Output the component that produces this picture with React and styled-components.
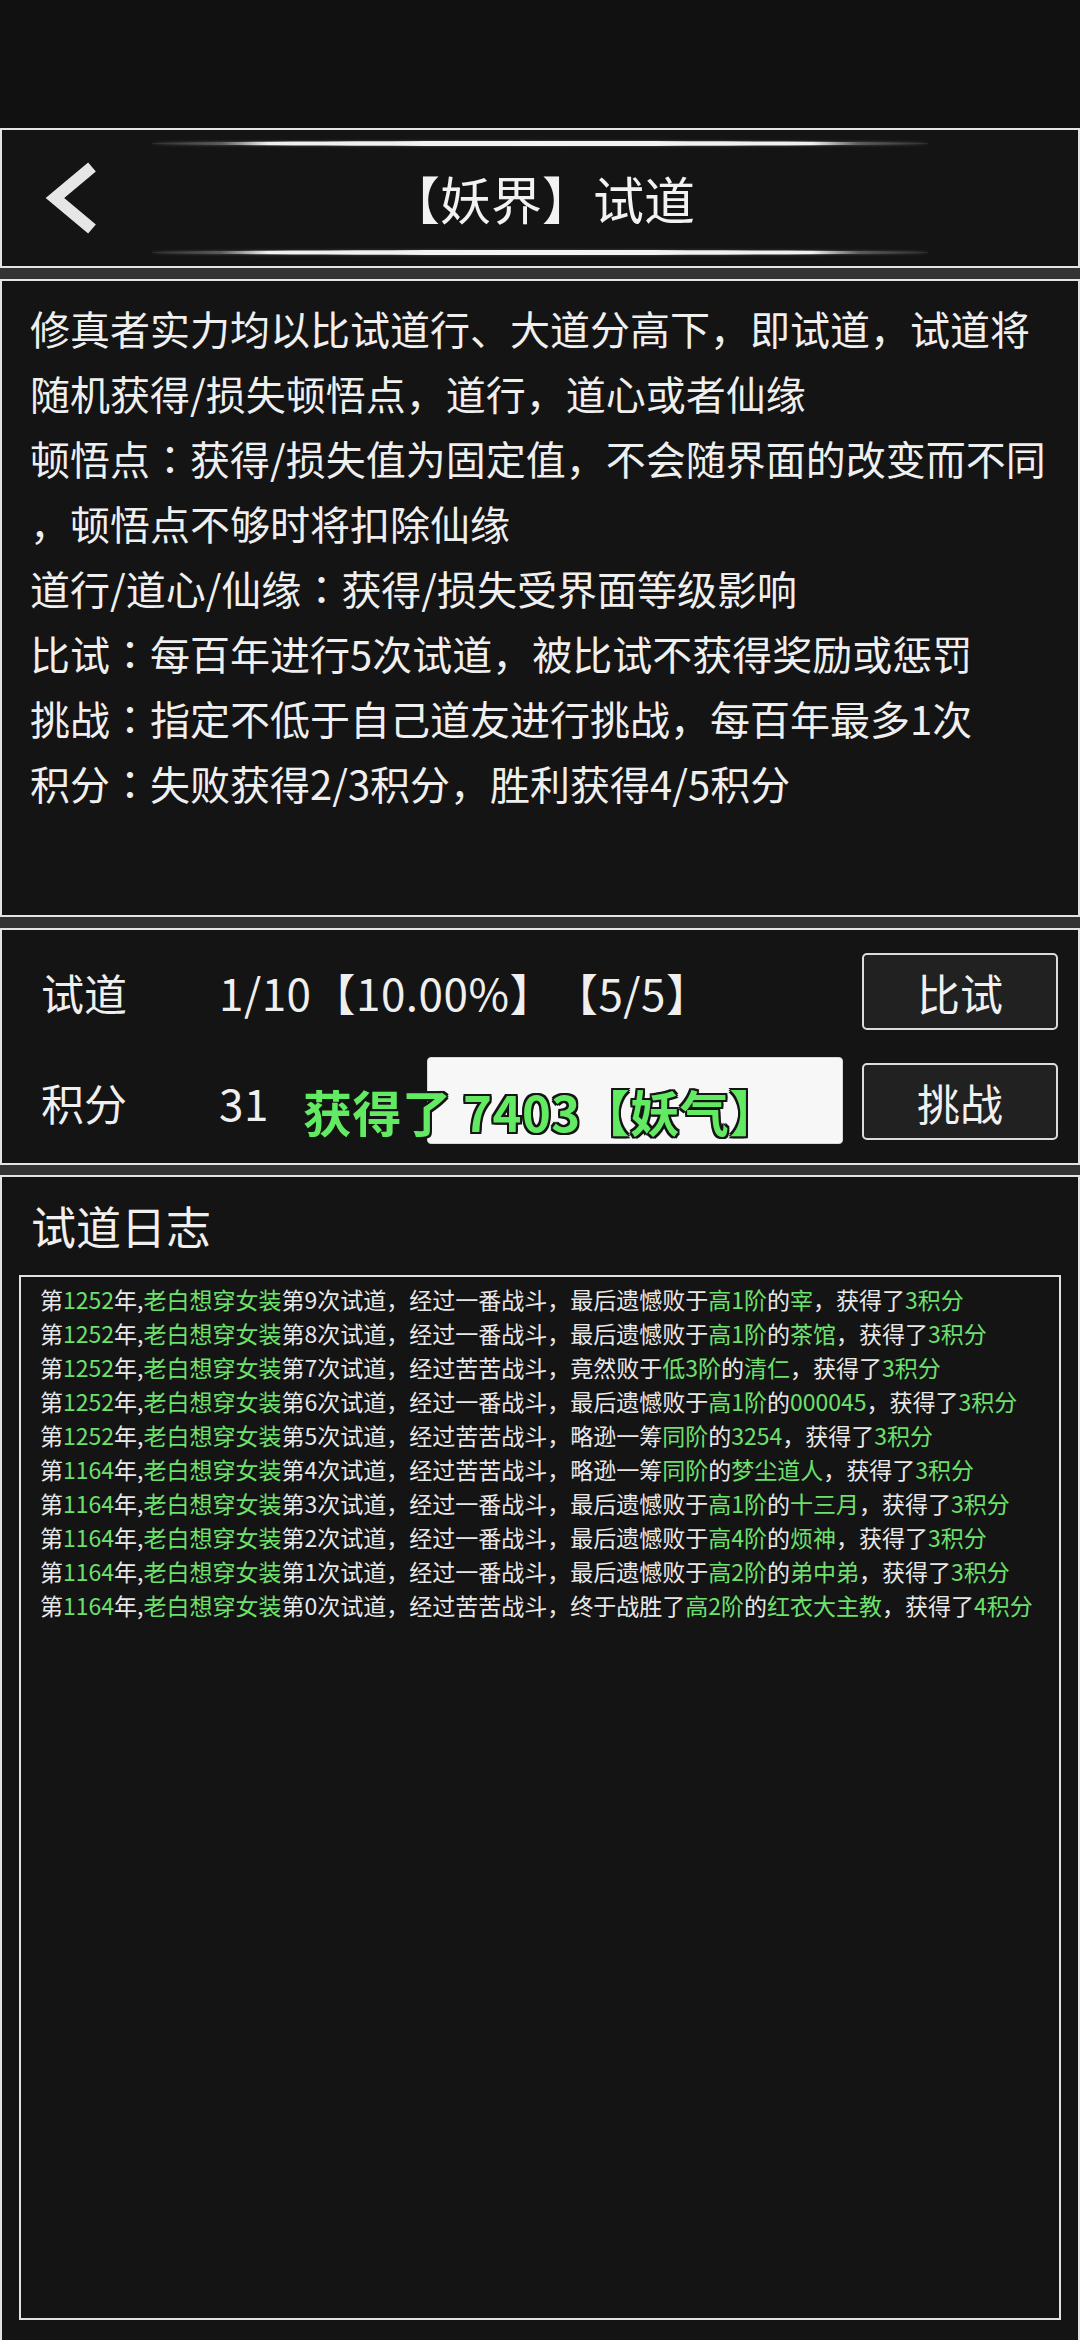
import React from "react";
import styled, { createGlobalStyle } from "styled-components";

const GlobalStyle = createGlobalStyle`
  html, body {
    margin: 0;
    padding: 0;
    background: #141414;
    overflow: hidden;
  }
  body {
    font-family: "Noto Sans CJK SC", "Noto Sans", sans-serif;
    text-spacing-trim: space-all;
  }
`;

const Page = styled.div`
  width: 1080px;
  height: 2340px;
  display: flex;
  flex-direction: column;
  background: #141414;
  overflow: hidden;
`;

const StatusBar = styled.div`
  height: 128px;
  flex-shrink: 0;
  background: #111;
`;

const Panel = styled.section`
  position: relative;
  box-sizing: border-box;
  flex-shrink: 0;
  height: ${(p) => p.$h}px;
  border: 2px solid #e4e4e4;
  border-bottom: ${(p) => (p.$open ? "none" : "2px solid #e4e4e4")};
  background: #141414;
`;

const Gap = styled.div`
  height: ${(p) => p.$h}px;
  flex-shrink: 0;
  background: #343434;
`;

/* header */
const HeaderPanel = styled(Panel)`
  display: flex;
  flex-direction: column;
  align-items: center;
  padding-top: 11px;
`;

const GlowLine = styled.div`
  width: 778px;
  height: 5px;
  border-radius: 50%;
  background: linear-gradient(
    90deg,
    rgba(255, 255, 255, 0.12) 0%,
    rgba(255, 255, 255, 0.3) 9%,
    #efefef 15%,
    #f4f4f4 50%,
    #efefef 85%,
    rgba(255, 255, 255, 0.3) 91%,
    rgba(255, 255, 255, 0.12) 100%
  );
  box-shadow: 0 0 3px rgba(255, 255, 255, 0.25);
`;

const TitleRow = styled.div`
  width: 100%;
  height: 104px;
  display: grid;
  grid-template-columns: 1fr auto 1fr;
  align-items: center;
`;

const BackButton = styled.button`
  justify-self: start;
  margin-left: 44px;
  padding: 0;
  border: none;
  background: none;
  width: 50px;
  height: 74px;
  & svg {
    display: block;
    overflow: visible;
  }
`;

const Title = styled.h1`
  margin: 0 0 0 4px;
  font-size: 51px;
  font-weight: 400;
  line-height: 60px;
  color: #f2f2f2;
  white-space: nowrap;
`;

/* description */
const DescPanel = styled(Panel)`
  padding: 15px 0 0 28px;
`;

const DescLine = styled.div`
  font-size: 40px;
  line-height: 65px;
  color: #efefef;
  white-space: nowrap;
`;

// full-width colon drawn centred, as in the game font
const Colon = styled.span`
  font-family: "Noto Sans CJK TC", "Noto Sans CJK SC", sans-serif;
`;

/* stats */
const StatsPanel = styled(Panel)`
  display: grid;
  grid-template-rows: 77px 77px;
  row-gap: 33px;
  padding: 23px 20px 0 39px;
`;

const StatRow = styled.div`
  display: grid;
  grid-template-columns: 178px 1fr 196px;
  align-items: center;
  color: #efefef;
  font-size: 43px;
  white-space: nowrap;
`;

const StatValue = styled.span`
  font-size: 44px;
  letter-spacing: 0.5px;
`;

const ActionButton = styled.button`
  box-sizing: border-box;
  height: 77px;
  display: flex;
  align-items: center;
  justify-content: center;
  border: 2px solid #dcdcdc;
  border-radius: 5px;
  background: #212121;
  color: #f0f0f0;
  font-family: inherit;
  font-size: 43px;
`;

const Toast = styled.div`
  position: absolute;
  left: 425px;
  top: 127px;
  width: 416px;
  height: 87px;
  box-sizing: border-box;
  border: 1px solid #d8d8d8;
  border-radius: 4px;
  background: #f7f7f7;
`;

const ToastText = styled.div`
  position: absolute;
  left: 301px;
  top: 151px;
  font-size: 49px;
  font-weight: 700;
  line-height: 60px;
  letter-spacing: 0.5px;
  color: #62ea62;
  white-space: nowrap;
  text-shadow: 2px 0 0 #151515, -2px 0 0 #151515, 0 2px 0 #151515,
    0 -2px 0 #151515, 2px 2px 0 #151515, -2px 2px 0 #151515,
    2px -2px 0 #151515, -2px -2px 0 #151515;
`;

/* log */
const LogPanel = styled(Panel)`
  padding: 0 17px 20px;
`;

const LogTitle = styled.h2`
  margin: 0;
  height: 98px;
  line-height: 98px;
  padding-left: 12px;
  font-size: 45px;
  font-weight: 400;
  color: #f0f0f0;
`;

const LogBox = styled.div`
  box-sizing: border-box;
  height: 1045px;
  border: 2px solid #e2e2e2;
  padding: 5px 0 0 19px;
`;

const LogLine = styled.div`
  font-size: 23px;
  line-height: 34px;
  color: #e8e8e8;
  white-space: nowrap;
`;

const Hl = styled.span`
  color: #6ee06e;
`;

const descLines = [
  "修真者实力均以比试道行、大道分高下，即试道，试道将",
  "随机获得/损失顿悟点，道行，道心或者仙缘",
  "顿悟点：获得/损失值为固定值，不会随界面的改变而不同",
  "，顿悟点不够时将扣除仙缘",
  "道行/道心/仙缘：获得/损失受界面等级影响",
  "比试：每百年进行5次试道，被比试不获得奖励或惩罚",
  "挑战：指定不低于自己道友进行挑战，每百年最多1次",
  "积分：失败获得2/3积分，胜利获得4/5积分",
];

// text inside {} is shown green
const logs = [
  "第{1252}年,{老白想穿女装}第9次试道，经过一番战斗，最后遗憾败于{高1阶}的{宰}，获得了{3积分}",
  "第{1252}年,{老白想穿女装}第8次试道，经过一番战斗，最后遗憾败于{高1阶}的{茶馆}，获得了{3积分}",
  "第{1252}年,{老白想穿女装}第7次试道，经过苦苦战斗，竟然败于{低3阶}的{清仁}，获得了{3积分}",
  "第{1252}年,{老白想穿女装}第6次试道，经过一番战斗，最后遗憾败于{高1阶}的{000045}，获得了{3积分}",
  "第{1252}年,{老白想穿女装}第5次试道，经过苦苦战斗，略逊一筹{同阶}的{3254}，获得了{3积分}",
  "第{1164}年,{老白想穿女装}第4次试道，经过苦苦战斗，略逊一筹{同阶}的{梦尘道人}，获得了{3积分}",
  "第{1164}年,{老白想穿女装}第3次试道，经过一番战斗，最后遗憾败于{高1阶}的{十三月}，获得了{3积分}",
  "第{1164}年,{老白想穿女装}第2次试道，经过一番战斗，最后遗憾败于{高4阶}的{烦神}，获得了{3积分}",
  "第{1164}年,{老白想穿女装}第1次试道，经过一番战斗，最后遗憾败于{高2阶}的{弟中弟}，获得了{3积分}",
  "第{1164}年,{老白想穿女装}第0次试道，经过苦苦战斗，终于战胜了{高2阶}的{红衣大主教}，获得了{4积分}",
];

function DescText({ text }) {
  const parts = text.split("：");
  return (
    <DescLine>
      {parts.map((p, i) => (
        <React.Fragment key={i}>
          {i > 0 && <Colon>：</Colon>}
          {p}
        </React.Fragment>
      ))}
    </DescLine>
  );
}

function LogEntry({ text }) {
  const parts = text.split(/[{}]/);
  return (
    <LogLine>
      {parts.map((p, i) => (i % 2 ? <Hl key={i}>{p}</Hl> : <span key={i}>{p}</span>))}
    </LogLine>
  );
}

export default function App() {
  return (
    <Page>
      <GlobalStyle />
      <StatusBar />

      <HeaderPanel $h={140}>
        <GlowLine />
        <TitleRow>
          <BackButton aria-label="返回">
            <svg width="50" height="74" viewBox="0 0 50 74">
              <polyline
                points="46,6 9,37 46,68"
                fill="none"
                stroke="#e6e6e6"
                strokeWidth="12"
                strokeLinejoin="miter"
              />
            </svg>
          </BackButton>
          <Title>【妖界】试道</Title>
          <div />
        </TitleRow>
        <GlowLine />
      </HeaderPanel>

      <Gap $h={11} />

      <DescPanel $h={638}>
        {descLines.map((l) => (
          <DescText key={l} text={l} />
        ))}
      </DescPanel>

      <Gap $h={11} />

      <StatsPanel $h={237}>
        <StatRow>
          <span>试道</span>
          <StatValue>1/10【10.00%】【5/5】</StatValue>
          <ActionButton>比试</ActionButton>
        </StatRow>
        <StatRow>
          <span>积分</span>
          <StatValue>31</StatValue>
          <ActionButton>挑战</ActionButton>
        </StatRow>
        <Toast />
        <ToastText>获得了 7403【妖气】</ToastText>
      </StatsPanel>

      <Gap $h={10} />

      <LogPanel $h={1165} $open>
        <LogTitle>试道日志</LogTitle>
        <LogBox>
          {logs.map((l) => (
            <LogEntry key={l} text={l} />
          ))}
        </LogBox>
      </LogPanel>
    </Page>
  );
}
